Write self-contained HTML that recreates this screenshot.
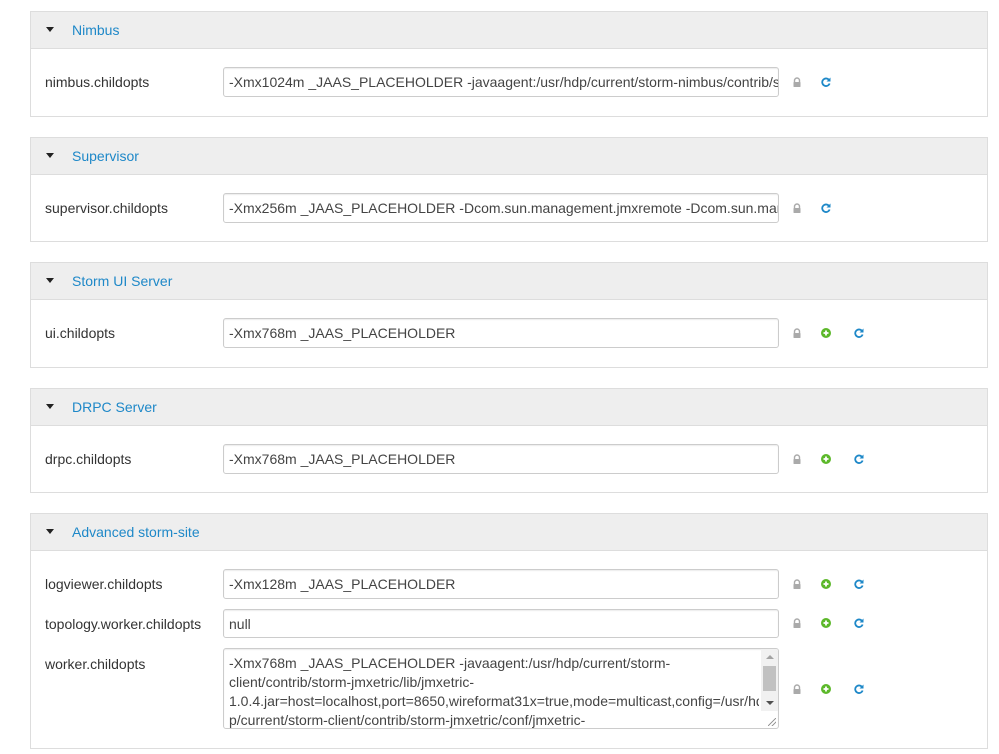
<!DOCTYPE html>
<html><head><meta charset="utf-8"><style>
*{box-sizing:border-box}
body{margin:0;width:999px;height:754px;background:#fff;font-family:"Liberation Sans",sans-serif;font-size:14px;color:#333;position:relative;overflow:hidden}
.p{position:absolute;left:30px;width:958px;border:1px solid #ddd;background:#fff}
.h{height:37px;background:#eee;border-bottom:1px solid #ddd;position:relative}
.h .c{position:absolute;left:15px;top:15px;width:0;height:0;border-left:4px solid transparent;border-right:4px solid transparent;border-top:5px solid #222}
.h .t{position:absolute;left:41px;top:10px;color:#1e88c8;font-size:14px}
.l{position:absolute;left:45px;font-size:14px}
.i{position:absolute;left:223px;width:556px;height:30px;border:1px solid #ccc;border-radius:3px;padding:6px 5px;white-space:nowrap;overflow:hidden;font-size:14px;color:#444;box-shadow:inset 0 1px 1px rgba(0,0,0,.08)}
.ic{position:absolute}
</style></head><body>
<svg width="0" height="0" style="position:absolute"><defs>
<symbol id="lk" viewBox="0 0 10 10"><path d="M2.5 5V3.5a2.5 2.5 0 0 1 5 0V5" fill="none" stroke="#aaa" stroke-width="1.4"/><rect x="1.5" y="5" width="7" height="5" rx="0.5" fill="#aaa"/></symbol>
<symbol id="pl" viewBox="0 0 10 10"><circle cx="5" cy="5" r="5" fill="#5cb82a"/><path d="M5 2.5v5M2.5 5h5" stroke="#fff" stroke-width="1.8"/></symbol>
<symbol id="rf" viewBox="0 0 10 10"><path d="M8.3 3.3A3.8 3.8 0 1 0 8.6 6.5" fill="none" stroke="#1e88c8" stroke-width="1.8"/><path d="M9.5 0.5v4h-4z" fill="#1e88c8"/></symbol>
</defs></svg>

<div class="p" style="top:11px;height:106px"><div class="h"><div class="c"></div><div class="t">Nimbus</div></div></div>
<div class="l" style="top:74px">nimbus.childopts</div>
<div class="i" style="top:67px">-Xmx1024m _JAAS_PLACEHOLDER -javaagent:/usr/hdp/current/storm-nimbus/contrib/storm-jmxetric</div>
<svg class="ic" style="left:792px;top:77px" width="10" height="10"><use href="#lk"/></svg>
<svg class="ic" style="left:821px;top:77px" width="10" height="10"><use href="#rf"/></svg>

<div class="p" style="top:137px;height:105px"><div class="h"><div class="c"></div><div class="t">Supervisor</div></div></div>
<div class="l" style="top:200px">supervisor.childopts</div>
<div class="i" style="top:193px">-Xmx256m _JAAS_PLACEHOLDER -Dcom.sun.management.jmxremote -Dcom.sun.management</div>
<svg class="ic" style="left:792px;top:203px" width="10" height="10"><use href="#lk"/></svg>
<svg class="ic" style="left:821px;top:203px" width="10" height="10"><use href="#rf"/></svg>

<div class="p" style="top:262px;height:106px"><div class="h"><div class="c"></div><div class="t">Storm UI Server</div></div></div>
<div class="l" style="top:325px">ui.childopts</div>
<div class="i" style="top:318px">-Xmx768m _JAAS_PLACEHOLDER</div>
<svg class="ic" style="left:792px;top:328px" width="10" height="10"><use href="#lk"/></svg>
<svg class="ic" style="left:821px;top:328px" width="10" height="10"><use href="#pl"/></svg>
<svg class="ic" style="left:854px;top:328px" width="10" height="10"><use href="#rf"/></svg>

<div class="p" style="top:388px;height:105px"><div class="h"><div class="c"></div><div class="t">DRPC Server</div></div></div>
<div class="l" style="top:451px">drpc.childopts</div>
<div class="i" style="top:444px">-Xmx768m _JAAS_PLACEHOLDER</div>
<svg class="ic" style="left:792px;top:454px" width="10" height="10"><use href="#lk"/></svg>
<svg class="ic" style="left:821px;top:454px" width="10" height="10"><use href="#pl"/></svg>
<svg class="ic" style="left:854px;top:454px" width="10" height="10"><use href="#rf"/></svg>

<div class="p" style="top:513px;height:236px"><div class="h"><div class="c"></div><div class="t">Advanced storm-site</div></div></div>
<div class="l" style="top:576px">logviewer.childopts</div>
<div class="i" style="top:569px">-Xmx128m _JAAS_PLACEHOLDER</div>
<svg class="ic" style="left:792px;top:579px" width="10" height="10"><use href="#lk"/></svg>
<svg class="ic" style="left:821px;top:579px" width="10" height="10"><use href="#pl"/></svg>
<svg class="ic" style="left:854px;top:579px" width="10" height="10"><use href="#rf"/></svg>

<div class="l" style="top:616px">topology.worker.childopts</div>
<div class="i" style="top:609px;height:29px">null</div>
<svg class="ic" style="left:792px;top:618px" width="10" height="10"><use href="#lk"/></svg>
<svg class="ic" style="left:821px;top:618px" width="10" height="10"><use href="#pl"/></svg>
<svg class="ic" style="left:854px;top:618px" width="10" height="10"><use href="#rf"/></svg>

<div class="l" style="top:656px">worker.childopts</div>
<div class="i" style="top:648px;height:81px;white-space:nowrap;padding:5px 5px 0 5px;line-height:19px">
<div style="width:530px;overflow:hidden">-Xmx768m _JAAS_PLACEHOLDER -javaagent:/usr/hdp/current/storm-<br>client/contrib/storm-jmxetric/lib/jmxetric-<br>1.0.4.jar=host=localhost,port=8650,wireformat31x=true,mode=multicast,config=/usr/hd<br>p/current/storm-client/contrib/storm-jmxetric/conf/jmxetric-</div>
<div style="position:absolute;right:0;top:0;width:17px;height:62px;background:#f1f1f1"><div style="position:absolute;left:5px;top:6px;border-left:4px solid transparent;border-right:4px solid transparent;border-bottom:4px solid #a3a3a3"></div><div style="position:absolute;left:2px;top:17px;width:13px;height:25px;background:#c1c1c1"></div><div style="position:absolute;left:5px;top:52px;border-left:4px solid transparent;border-right:4px solid transparent;border-top:4px solid #505050"></div></div>
<div style="position:absolute;right:2px;bottom:2px;width:8px;height:8px;background:linear-gradient(135deg,transparent 45%,#999 45%,#999 55%,transparent 55%,transparent 70%,#999 70%,#999 80%,transparent 80%)"></div>
</div>
<svg class="ic" style="left:792px;top:684px" width="10" height="10"><use href="#lk"/></svg>
<svg class="ic" style="left:821px;top:684px" width="10" height="10"><use href="#pl"/></svg>
<svg class="ic" style="left:854px;top:684px" width="10" height="10"><use href="#rf"/></svg>
</body></html>
